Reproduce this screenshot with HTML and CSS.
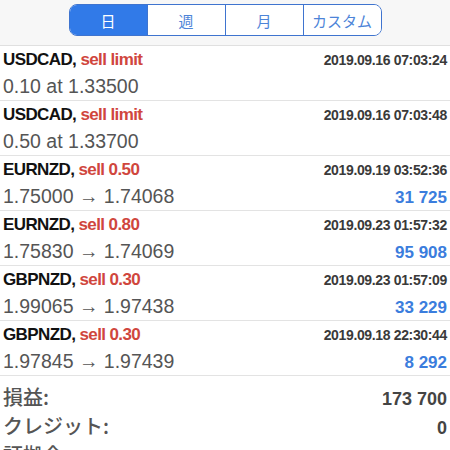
FILE: index.html
```html
<!DOCTYPE html>
<html>
  <head>
    <title>History</title>
    <link rel="stylesheet" href="styles.css">
  </head>
  <body>
    <div class="header">
      <div class="segments">
        <div class="seg active">日</div>
        <div class="seg">週</div>
        <div class="seg">月</div>
        <div class="seg">カスタム</div>
      </div>
    </div>

    <ul class="orders">
      <li class="order">
        <div class="line1"><span class="sym">USDCAD, <span class="type">sell limit</span></span><span class="date">2019.09.16 07:03:24</span></div>
        <div class="line2"><span class="price">0.10 at 1.33500</span></div>
      </li>
      <li class="order">
        <div class="line1"><span class="sym">USDCAD, <span class="type">sell limit</span></span><span class="date">2019.09.16 07:03:48</span></div>
        <div class="line2"><span class="price">0.50 at 1.33700</span></div>
      </li>
      <li class="order">
        <div class="line1"><span class="sym">EURNZD, <span class="type">sell 0.50</span></span><span class="date">2019.09.19 03:52:36</span></div>
        <div class="line2"><span class="price">1.75000 &rarr; 1.74068</span><span class="profit">31 725</span></div>
      </li>
      <li class="order">
        <div class="line1"><span class="sym">EURNZD, <span class="type">sell 0.80</span></span><span class="date">2019.09.23 01:57:32</span></div>
        <div class="line2"><span class="price">1.75830 &rarr; 1.74069</span><span class="profit">95 908</span></div>
      </li>
      <li class="order">
        <div class="line1"><span class="sym">GBPNZD, <span class="type">sell 0.30</span></span><span class="date">2019.09.23 01:57:09</span></div>
        <div class="line2"><span class="price">1.99065 &rarr; 1.97438</span><span class="profit">33 229</span></div>
      </li>
      <li class="order">
        <div class="line1"><span class="sym">GBPNZD, <span class="type">sell 0.30</span></span><span class="date">2019.09.18 22:30:44</span></div>
        <div class="line2"><span class="price">1.97845 &rarr; 1.97439</span><span class="profit">8 292</span></div>
      </li>
    </ul>

    <div class="summary">
      <div class="sum-row"><span class="label">損益:</span><span class="value">173 700</span></div>
      <div class="sum-row"><span class="label">クレジット:</span><span class="value">0</span></div>
      <div class="sum-row"><span class="label">証拠金:</span><span class="value">0</span></div>
    </div>
  </body>
</html>
```

FILE: styles.css
```css
body { margin: 0; background: #fff; font-family: "Liberation Sans", "Noto Sans CJK JP", sans-serif; overflow: hidden; }

.header { background: #f7f7f7; padding: 4px 0 9px; border-bottom: 1px solid #e0e0e0; display: flex; justify-content: center; }
.segments { display: flex; border: 1px solid #3f74cf; border-radius: 8px; overflow: hidden; }
.seg { width: 77px; height: 30px; display: flex; align-items: center; justify-content: center; font-size: 15px; color: #4d84d8; background: #fff; border-left: 1px solid #3f74cf; font-family: "Noto Sans CJK JP", sans-serif; }
.seg:first-child { border-left: none; }
.seg.active { background: #317ae8; color: #fff; }

.orders { list-style-type: none; margin: 0; padding: 0; }
.order { padding: 3px 3px 0 3px; height: 51px; border-bottom: 1px solid #e3e3e3; }
.line1 { display: flex; justify-content: space-between; align-items: baseline; height: 22px; line-height: 22px; }
.line2 { display: flex; justify-content: space-between; align-items: baseline; height: 29px; line-height: 30px; }
.sym { font-weight: bold; font-size: 17px; color: #111; letter-spacing: -0.6px; }
.type { color: #d0463d; }
.date { font-weight: bold; font-size: 14px; color: #3a3a3a; letter-spacing: -0.35px; }
.price { font-size: 19.5px; color: #555; }
.profit { font-weight: bold; font-size: 17px; color: #3b7ddd; }

.summary { padding: 6px 3px 0; }
.sum-row { display: flex; justify-content: space-between; align-items: baseline; height: 29px; line-height: 29px; }
.label { font-size: 20px; color: #555; font-family: "Noto Sans CJK JP", sans-serif; font-weight: 500; }
.value { font-size: 18px; font-weight: bold; color: #444; }
```
